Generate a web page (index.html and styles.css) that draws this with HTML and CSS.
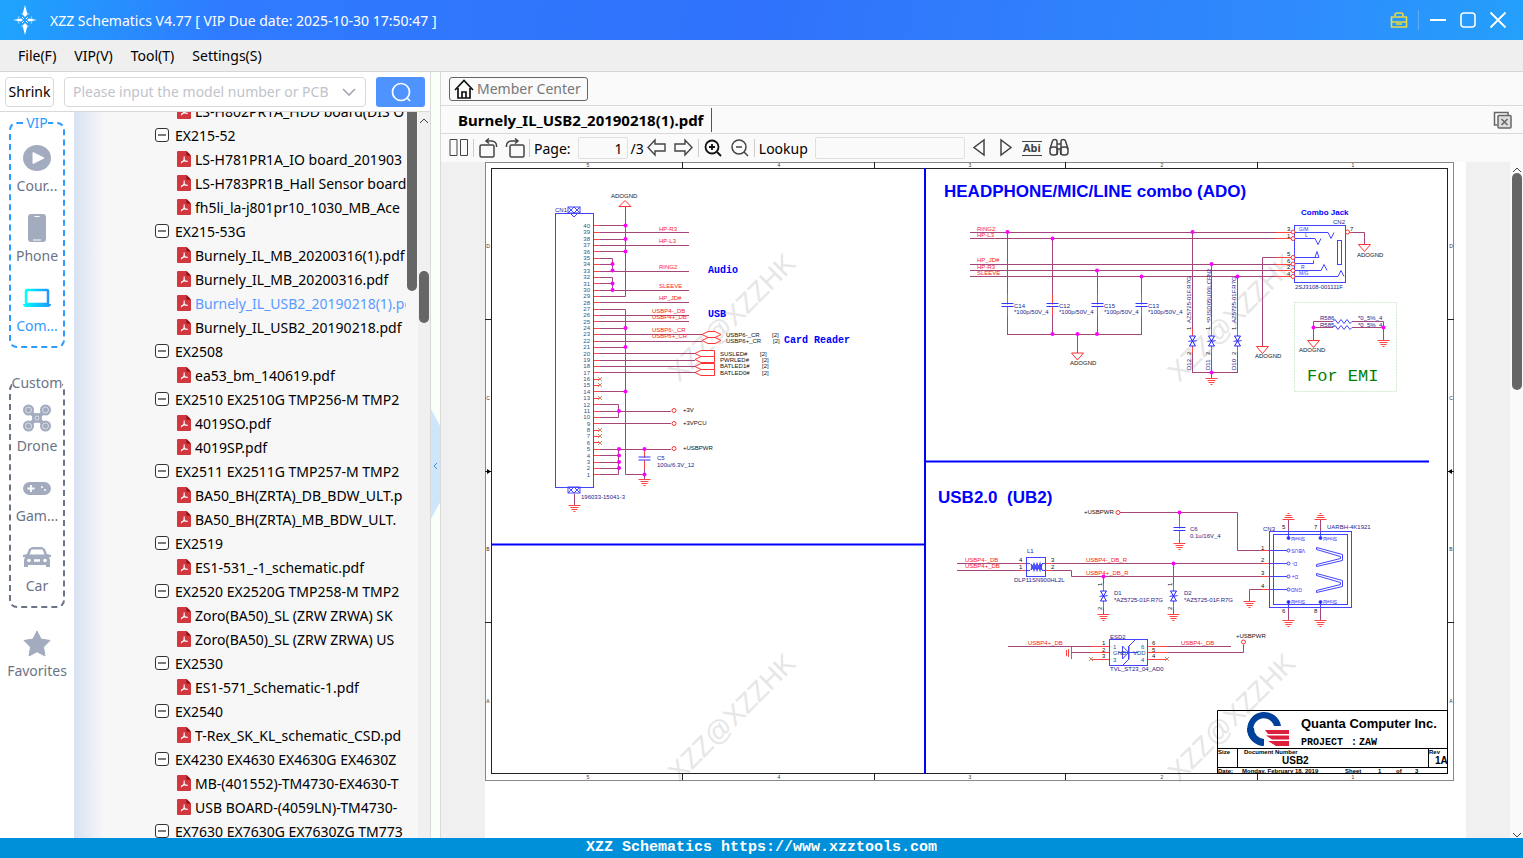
FILE: index.html
```html
<!DOCTYPE html>
<html lang="en">

<head>
    <meta charset="UTF-8">
    <meta name="viewport" content="width=device-width, initial-scale=1.0">
    <title>XZZ Schematics</title>
    <link rel="stylesheet" href="styles.css">
</head>

<body>
    <!-- Shared symbols -->
    <svg class="defs" aria-hidden="true">
        <symbol id="minus" viewBox="0 0 14 14">
            <rect x="0.5" y="0.5" width="13" height="13" rx="2.5" fill="#fff" stroke="#333" />
            <path d="M3 7h8" stroke="#333" stroke-width="1.3" />
        </symbol>
        <symbol id="pdf" viewBox="0 0 14 16">
            <path d="M1 0h8.5l4.5 4.5V15a1 1 0 0 1-1 1H1a1 1 0 0 1-1-1V1a1 1 0 0 1 1-1z" fill="#d2373f" />
            <path d="M9.5 0v4.5H14z" fill="#8f1018" />
            <path d="M7 5.5c.8 2.5.2 4.5-3 6.5M6.8 8c1 1.8 2.2 2.6 4 2.7M4.5 11c2-1.2 4-1.4 6-.6" fill="none" stroke="#fff" stroke-width="1.1" />
        </symbol>
        <defs>
            <path id="gnd" d="M-6 .5H6M-4 2.5H4M-3 4.5H3M-1 6.5H1" fill="none" stroke="#f44" />
            <path id="agnd" d="M-6 0H6L0 7z" fill="#fff" stroke="#f33" />
            <g id="cap">
                <path d="M0-9V12" stroke="#f44" />
                <path d="M-3 1H3V3H-3z" fill="#fff" />
                <path d="M-6 0H6M-6 3H6" stroke="#33f" />
            </g>
            <g id="tvs">
                <path d="M0-12V12" stroke="#f44" />
                <path d="M-3-5H3L0 0zM-3 5H3L0 0zM-4 1L-3 0H3L4-1" fill="#fff" stroke="#22f" />
            </g>
            <circle id="dot" r="2" fill="#f0f" />
            <path id="nc" d="M-2-2L2 2M-2 2L2-2" stroke="#c98a6a" />
        </defs>
    </svg>

    <header class="titlebar">
        <svg class="logo" width="24" height="30" viewBox="0 0 24 30">
            <circle cx="12" cy="15" r="7" fill="none" stroke="#8fd0ff" stroke-width="1.2" stroke-dasharray="8 3" stroke-dashoffset="4" />
            <path d="M12 0l2.5 9.5L12 12l-2.5-2.5zM12 30l2.5-9.5L12 18l-2.5 2.5zM0 15l8-1.5 2 1.5-2 1.5zM24 15l-8-1.5-2 1.5 2 1.5z" fill="#fff" />
            <path d="M9 12l2 2M15 12l-2 2M9 18l2-2M15 18l-2-2" stroke="#fff" />
        </svg>
        <span class="app-title">XZZ Schematics V4.77 [ VIP Due date: 2025-10-30 17:50:47 ]</span>
        <div class="window-buttons">
            <button aria-label="Toolbox"><svg width="18" height="18" viewBox="0 0 18 18" fill="none" stroke="#e6dc3c" stroke-width="1.6">
                    <path d="M5 5V4q0-2 2-2h4q2 0 2 2v1M1.500 6h15v10h-15zM1.500 11h15M6 13h6" />
                </svg></button>
            <span class="divider"></span>
            <button aria-label="Minimize"><svg width="18" height="18" viewBox="0 0 18 18" stroke="#fff" stroke-width="2">
                    <path d="M1 9h16" />
                </svg></button>
            <button aria-label="Maximize"><svg width="18" height="18" viewBox="0 0 18 18" fill="none" stroke="#fff" stroke-width="1.6">
                    <rect x="2" y="2" width="14" height="14" rx="3" />
                </svg></button>
            <button aria-label="Close"><svg width="18" height="18" viewBox="0 0 18 18" stroke="#fff" stroke-width="1.8">
                    <path d="M1.5 1.5l15 15M16.5 1.5l-15 15" />
                </svg></button>
        </div>
    </header>

    <nav class="menubar">
        <button>File(F)</button>
        <button>VIP(V)</button>
        <button>Tool(T)</button>
        <button>Settings(S)</button>
    </nav>

    <main class="workspace">
        <section class="left-panel">
            <div class="search-row">
                <button class="shrink">Shrink</button>
                <div class="combo">
                    <input type="text" aria-label="Model number" placeholder="Please input the model number or PCB">
                    <svg width="14" height="8" viewBox="0 0 14 8" fill="none" stroke="#a0a6ae" stroke-width="1.6">
                        <path d="M1 1l6 6 6-6" />
                    </svg>
                </div>
                <button class="search-button" aria-label="Search"><svg width="22" height="20" viewBox="0 0 22 20" fill="none" stroke="#fff" stroke-width="1.7">
                        <circle cx="11" cy="10" r="8.5" />
                        <path d="M17 16l3 3" />
                    </svg></button>
            </div>

            <div class="browser">
                <aside class="categories">
                    <fieldset class="group vip">
                        <legend>VIP</legend>
                        <button class="category"><svg viewBox="0 0 28 28">
                                <ellipse cx="14" cy="14" rx="14" ry="13" fill="#a3abbf" />
                                <path d="M10 8.5v11l11-5.5z" fill="#fff" stroke="#fff" stroke-linejoin="round" />
                            </svg>Cour...</button>
                        <button class="category"><svg viewBox="0 0 28 28">
                                <rect x="5" y="0" width="18" height="28" rx="3" fill="#a3abbf" />
                                <path d="M11.5 2.5h5M10 26h8" stroke="#fff" />
                            </svg>Phone</button>
                        <button class="category active"><svg viewBox="0 0 28 28">
                                <defs>
                                    <linearGradient id="cyan">
                                        <stop offset="0" stop-color="#0ff" />
                                        <stop offset="1" stop-color="#2196ff" />
                                    </linearGradient>
                                </defs>
                                <rect x="3" y="6" width="22" height="14" rx="1" fill="none" stroke="url(#cyan)" stroke-width="2.5" />
                                <path d="M0 20h28v1l-2 2H2l-2-2z" fill="url(#cyan)" />
                            </svg>Com...</button>
                    </fieldset>

                    <fieldset class="group custom">
                        <legend>Custom</legend>
                        <button class="category"><svg viewBox="0 0 28 28">
                                <path d="M5 6l9 8 9-8M5 22l9-8 9 8" fill="none" stroke="#a3abbf" stroke-width="4" />
                                <g fill="#a3abbf">
                                    <circle cx="5.5" cy="6" r="5.5" />
                                    <circle cx="22.5" cy="6" r="5.5" />
                                    <circle cx="5.5" cy="22" r="5.5" />
                                    <circle cx="22.5" cy="22" r="5.5" />
                                    <circle cx="14" cy="14" r="5" />
                                </g>
                                <g fill="none" stroke="#e6e9f0" stroke-width="0.8">
                                    <circle cx="5.5" cy="6" r="3" />
                                    <circle cx="22.5" cy="6" r="3" />
                                    <circle cx="5.5" cy="22" r="3" />
                                    <circle cx="22.5" cy="22" r="3" />
                                    <circle cx="14" cy="14" r="2" />
                                </g>
                            </svg>Drone</button>
                        <button class="category"><svg viewBox="0 0 28 28">
                                <rect x="0" y="8" width="28" height="13" rx="6.5" fill="#a3abbf" />
                                <path d="M8 11v7M4.5 14.5h7" stroke="#fff" stroke-width="1.8" />
                                <circle cx="19" cy="13" r="1" fill="#fff" />
                                <circle cx="22" cy="16" r="1" fill="#fff" />
                            </svg>Gam...</button>
                        <button class="category"><svg viewBox="0 0 28 28">
                                <path d="M0 11l4-1 2-5 3-2h10l3 2 2 5 4 1v2h-2l1 3v7h-4v-2H5v2H1v-7l1-3H0z" fill="#a3abbf" />
                                <path d="M6.500 10.500L8.500 5.500h11l2 5z" fill="#fff" />
                                <circle cx="6" cy="16.5" r="1.8" fill="#fff" />
                                <circle cx="22" cy="16.5" r="1.8" fill="#fff" />
                                <path d="M11 16.5h6" stroke="#fff" stroke-width="2.5" />
                            </svg>Car</button>
                    </fieldset>

                    <button class="category favorites"><svg viewBox="0 0 28 28">
                            <path d="M14 2l4 8 9 1.5-6.5 6.5 1.5 9-8-4.3L6 27l1.5-9L1 11.5 10 10z" fill="#a3abbf" stroke="#a3abbf" stroke-linejoin="round" />
                        </svg>Favorites</button>
                </aside>

                <div class="tree">
                    <ul>
                        <li class="file"><a href="#"><svg><use href="#pdf" /></svg>LS-H802PR1A_HDD board(DIS O</a></li>
                        <li><button><svg><use href="#minus" /></svg>EX215-52</button></li>
                        <li class="file"><a href="#"><svg><use href="#pdf" /></svg>LS-H781PR1A_IO board_201903</a></li>
                        <li class="file"><a href="#"><svg><use href="#pdf" /></svg>LS-H783PR1B_Hall Sensor board</a></li>
                        <li class="file"><a href="#"><svg><use href="#pdf" /></svg>fh5li_la-j801pr10_1030_MB_Ace</a></li>
                        <li><button><svg><use href="#minus" /></svg>EX215-53G</button></li>
                        <li class="file"><a href="#"><svg><use href="#pdf" /></svg>Burnely_IL_MB_20200316(1).pdf</a></li>
                        <li class="file"><a href="#"><svg><use href="#pdf" /></svg>Burnely_IL_MB_20200316.pdf</a></li>
                        <li class="file selected"><a href="#"><svg><use href="#pdf" /></svg>Burnely_IL_USB2_20190218(1).pdf</a></li>
                        <li class="file"><a href="#"><svg><use href="#pdf" /></svg>Burnely_IL_USB2_20190218.pdf</a></li>
                        <li><button><svg><use href="#minus" /></svg>EX2508</button></li>
                        <li class="file"><a href="#"><svg><use href="#pdf" /></svg>ea53_bm_140619.pdf</a></li>
                        <li><button><svg><use href="#minus" /></svg>EX2510 EX2510G TMP256-M TMP2</button></li>
                        <li class="file"><a href="#"><svg><use href="#pdf" /></svg>4019SO.pdf</a></li>
                        <li class="file"><a href="#"><svg><use href="#pdf" /></svg>4019SP.pdf</a></li>
                        <li><button><svg><use href="#minus" /></svg>EX2511 EX2511G TMP257-M TMP2</button></li>
                        <li class="file"><a href="#"><svg><use href="#pdf" /></svg>BA50_BH(ZRTA)_DB_BDW_ULT.p</a></li>
                        <li class="file"><a href="#"><svg><use href="#pdf" /></svg>BA50_BH(ZRTA)_MB_BDW_ULT.</a></li>
                        <li><button><svg><use href="#minus" /></svg>EX2519</button></li>
                        <li class="file"><a href="#"><svg><use href="#pdf" /></svg>ES1-531_-1_schematic.pdf</a></li>
                        <li><button><svg><use href="#minus" /></svg>EX2520 EX2520G TMP258-M TMP2</button></li>
                        <li class="file"><a href="#"><svg><use href="#pdf" /></svg>Zoro(BA50)_SL (ZRW ZRWA) SK</a></li>
                        <li class="file"><a href="#"><svg><use href="#pdf" /></svg>Zoro(BA50)_SL (ZRW ZRWA) US</a></li>
                        <li><button><svg><use href="#minus" /></svg>EX2530</button></li>
                        <li class="file"><a href="#"><svg><use href="#pdf" /></svg>ES1-571_Schematic-1.pdf</a></li>
                        <li><button><svg><use href="#minus" /></svg>EX2540</button></li>
                        <li class="file"><a href="#"><svg><use href="#pdf" /></svg>T-Rex_SK_KL_schematic_CSD.pd</a></li>
                        <li><button><svg><use href="#minus" /></svg>EX4230 EX4630 EX4630G EX4630Z</button></li>
                        <li class="file"><a href="#"><svg><use href="#pdf" /></svg>MB-(401552)-TM4730-EX4630-T</a></li>
                        <li class="file"><a href="#"><svg><use href="#pdf" /></svg>USB BOARD-(4059LN)-TM4730-</a></li>
                        <li><button><svg><use href="#minus" /></svg>EX7630 EX7630G EX7630ZG TM773</button></li>
                    </ul>
                </div>
                <div class="inner-scroll"><span></span></div>
                <div class="outer-scroll">
                    <svg width="10" height="6" viewBox="0 0 10 6" fill="none" stroke="#444">
                        <path d="M1 5l4-4 4 4" />
                    </svg>
                    <span></span>
                </div>
            </div>
        </section>

        <div class="splitter"><button aria-label="Collapse panel"><svg width="5" height="8" viewBox="0 0 5 8" fill="none" stroke="#4a90d9">
                    <path d="M4 1L1 4l3 3" />
                </svg></button></div>

        <section class="viewer">
            <div class="member-row">
                <button class="member"><svg width="20" height="20" viewBox="0 0 20 20" fill="none" stroke="#111" stroke-width="1.7">
                        <path d="M1 11l9-9.5 9 9.5M4 9v10h12V9M8 19v-6h4v6" />
                    </svg>Member Center</button>
            </div>
            <div class="tabs">
                <button class="tab">Burnely_IL_USB2_20190218(1).pdf</button>
                <button class="close-all" aria-label="Close all"><svg width="20" height="18" viewBox="0 0 20 18" fill="none" stroke="#666" stroke-width="1.5">
                        <path d="M4 14H1.5V1.5H15V4" />
                        <rect x="5" y="4.5" width="13" height="12.5" rx="1" fill="#ddd" />
                        <path d="M8.5 8l6 6M14.5 8l-6 6" />
                    </svg></button>
            </div>
            <div class="toolbar">
                <button aria-label="Two pages"><svg viewBox="0 0 20 20">
                        <path d="M1 1.5h7v16H1zM11.5 1.5h7v16h-7z" />
                    </svg></button>
                <span class="sep"></span>
                <button aria-label="Rotate left"><svg viewBox="0 0 20 20" stroke-width="1.5">
                        <rect x="2" y="7" width="14" height="12" rx="1.5" />
                        <path d="M18.500 9c.5-4-2-6-5-6H8M11 .5L8 3l3 2.500" />
                    </svg></button>
                <button aria-label="Rotate right"><svg viewBox="0 0 20 20" stroke-width="1.5">
                        <rect x="5" y="7" width="14" height="12" rx="1.5" />
                        <path d="M1.500 9c-.5-4 2-6 5-6h6M10 .5L13 3l-3 2.500" />
                    </svg></button>
                <span class="sep"></span>
                <label class="page-label" for="page">Page:</label>
                <input id="page" type="text" value="1">
                <span class="count">/3</span>
                <button aria-label="Previous page"><svg viewBox="0 0 20 20" stroke-width="1.4">
                        <path d="M1 9.500L8 2v4h10v7H8v4z" />
                    </svg></button>
                <button aria-label="Next page"><svg viewBox="0 0 20 20" stroke-width="1.4">
                        <path d="M18 9.500L11 2v4H1v7h10v4z" />
                    </svg></button>
                <span class="sep"></span>
                <button aria-label="Zoom in"><svg class="dark" viewBox="0 0 20 20" stroke-width="1.8">
                        <circle cx="9" cy="9" r="6.5" />
                        <path d="M14 14l4 4M6 9h6M9 6v6" />
                    </svg></button>
                <button aria-label="Zoom out"><svg viewBox="0 0 20 20" stroke-width="1.5">
                        <circle cx="9" cy="9" r="7" />
                        <path d="M14 14l4 4M6 9h6" />
                    </svg></button>
                <span class="sep"></span>
                <label class="lookup-label" for="lookup">Lookup</label>
                <input id="lookup" type="text">
                <button aria-label="Find previous"><svg viewBox="0 0 20 20" stroke-width="1.5">
                        <path d="M16 2v15L6 9.500z" />
                    </svg></button>
                <button aria-label="Find next"><svg viewBox="0 0 20 20" stroke-width="1.5">
                        <path d="M6 2v15l10-7.500z" />
                    </svg></button>
                <button class="abi">Abi</button>
                <button aria-label="Find all"><svg viewBox="0 0 20 20" stroke-width="1.5">
                        <path d="M1 11L3.500 3c.5-2 4-2 4.500 0v14M19 11l-2.500-8c-.5-2-4-2-4.500 0v14M8 6h4M8 11h4" />
                        <rect x="1" y="9" width="7.5" height="8" rx="3" />
                        <rect x="11.500" y="9" width="7.5" height="8" rx="3" />
                    </svg></button>
            </div>

            <div class="canvas">
                <div class="sheet">
                    <svg viewBox="485 162 981 676" class="schematic">
                        <!-- Watermarks -->
                        <g class="watermark">
                            <text transform="translate(679 383) rotate(-45)">XZZ@XZZHK</text>
                            <text transform="translate(1179 383) rotate(-45)">XZZ@XZZHK</text>
                            <text transform="translate(679 783) rotate(-45)">XZZ@XZZHK</text>
                            <text transform="translate(1179 783) rotate(-45)">XZZ@XZZHK</text>
                        </g>

                        <!-- Frame -->
                        <g class="frame">
                            <rect x="485.5" y="162.5" width="968" height="618" stroke="#888" />
                            <rect x="491.5" y="168.5" width="956" height="605" />
                            <path d="M682.5 162v6M874.5 162v6M1065.5 162v6M1257.5 162v6M682.5 774v6M874.5 774v6M1065.5 774v6M1257.5 774v6M485 319.5h6M485 622.5h6M1448 319.5h6M1448 622.5h6M485 471.5h6M1448 471.5h6" />
                            <path d="M487 469l4 2.5-4 2.5zM1452 469l-4 2.5 4 2.5z" fill="#000" stroke="none" />
                        </g>
                        <g class="zone">
                            <text x="588" y="167">5</text><text x="779" y="167">4</text><text x="970" y="167">3</text><text x="1162" y="167">2</text><text x="1353" y="167">1</text>
                            <text x="588" y="779">5</text><text x="779" y="779">4</text><text x="970" y="779">3</text><text x="1162" y="779">2</text><text x="1353" y="779">1</text>
                            <text x="488" y="248">D</text><text x="488" y="400">C</text><text x="488" y="551">B</text><text x="488" y="703">A</text>
                            <text x="1451" y="248">D</text><text x="1451" y="400">C</text><text x="1451" y="551">B</text><text x="1451" y="703">A</text>
                        </g>
                        <path class="section-line" d="M925 168V774M491 544.5H925M925 461.5H1429" />

                        <!-- CN1 connector -->
                        <g class="wire">
                            <path d="M600 225.5h25M600 232.5h89M600 239.5h25M600 245.5h89M600 251.5h25M600 258.5h12.5v13M600 264.5h12M600 271.5h89M600 277.5h12.5v13M600 283.5h12M600 290.5h89M600 296.5h25.5V207M600 302.5h89" />
                            <path d="M600 309.5h25.5V474.5h19M600 315.5h89M600 321.5h89M600 328.5h25M600 334.5h102M600 341.5h102M600 347.5h25M600 353.5h95M600 360.5h95M600 366.5h95M600 372.5h95M600 391.5h25" />
                            <path d="M600 404.5h18.5v13H600M600 411.5h71M600 423.5h71M600 449.5h71M600 455.5h18M600 462.5h18M600 468.5h18M618.5 449v25.5H600M644.5 449v30M574.5 494v12" />
                        </g>
                        <path class="pin-stub" d="M594 225.5h6M594 232.5h6M594 239.5h6M594 245.5h6M594 251.5h6M594 258.5h6M594 264.5h6M594 271.5h6M594 277.5h6M594 283.5h6M594 290.5h6M594 296.5h6M594 302.5h6M594 309.5h6M594 315.5h6M594 321.5h6M594 328.5h6M594 334.5h6M594 341.5h6M594 347.5h6M594 353.5h6M594 360.5h6M594 366.5h6M594 372.5h6M594 379.5h6M594 385.5h6M594 391.5h6M594 398.5h6M594 404.5h6M594 411.5h6M594 417.5h6M594 423.5h6M594 430.5h6M594 436.5h6M594 442.5h6M594 449.5h6M594 455.5h6M594 462.5h6M594 468.5h6M594 474.5h6" />
                        <rect class="part" x="555.5" y="213.5" width="38" height="274" />
                        <g class="hatch">
                            <rect x="568" y="207" width="12" height="6" />
                            <path d="M568 207l6 6 6-6M568 213l6-6 6 6M571 214l3 3 3-3" />
                            <rect x="568" y="487" width="12" height="6" />
                            <path d="M568 487l6 6 6-6M568 493l6-6 6 6" />
                        </g>
                        <g class="pins">
                            <text x="590" y="228">40</text><text x="590" y="234">39</text><text x="590" y="241">38</text><text x="590" y="247">37</text><text x="590" y="254">36</text>
                            <text x="590" y="260">35</text><text x="590" y="266">34</text><text x="590" y="273">33</text><text x="590" y="279">32</text><text x="590" y="286">31</text>
                            <text x="590" y="292">30</text><text x="590" y="298">29</text><text x="590" y="305">28</text><text x="590" y="311">27</text><text x="590" y="317">26</text>
                            <text x="590" y="324">25</text><text x="590" y="330">24</text><text x="590" y="336">23</text><text x="590" y="343">22</text><text x="590" y="349">21</text>
                            <text x="590" y="356">20</text><text x="590" y="362">19</text><text x="590" y="368">18</text><text x="590" y="375">17</text><text x="590" y="381">16</text>
                            <text x="590" y="387">15</text><text x="590" y="394">14</text><text x="590" y="400">13</text><text x="590" y="407">12</text><text x="590" y="413">11</text>
                            <text x="590" y="419">10</text><text x="590" y="426">9</text><text x="590" y="432">8</text><text x="590" y="438">7</text><text x="590" y="445">6</text>
                            <text x="590" y="451">5</text><text x="590" y="458">4</text><text x="590" y="464">3</text><text x="590" y="470">2</text><text x="590" y="477">1</text>
                        </g>
                        <g>
                            <use href="#nc" x="600" y="379" /><use href="#nc" x="600" y="385" /><use href="#nc" x="600" y="398" /><use href="#nc" x="600" y="430" /><use href="#nc" x="600" y="436" /><use href="#nc" x="600" y="443" />
                            <use href="#dot" x="625.5" y="225.5" /><use href="#dot" x="625.5" y="239" /><use href="#dot" x="625.5" y="251.5" /><use href="#dot" x="612.5" y="264" /><use href="#dot" x="612.5" y="270.5" /><use href="#dot" x="612.5" y="283.5" /><use href="#dot" x="612.5" y="290" />
                            <use href="#dot" x="625.5" y="328" /><use href="#dot" x="625.5" y="347" /><use href="#dot" x="625.5" y="391.5" /><use href="#dot" x="619" y="411" /><use href="#dot" x="619" y="449" /><use href="#dot" x="619" y="455.5" /><use href="#dot" x="619" y="462" /><use href="#dot" x="619" y="468" />
                            <use href="#cap" x="644.5" y="457" />
                            <use href="#dot" x="644.5" y="449" /><use href="#dot" x="644.5" y="474.5" />
                            <use href="#gnd" x="644.5" y="479" /><use href="#gnd" x="574.5" y="505" />
                        </g>
                        <g class="port">
                            <path d="M619 206.5h12l-6-6z" />
                            <path d="M702 334.5l6-3h7l6 3-6 3h-7zM702 340.5l6-3h7l6 3-6 3h-7z" />
                            <path d="M695 353.5l6-3h13.5v6H701zM695 359.5l6-3h13.5v6H701zM695 366.5l6-3h13.5v6H701zM695 372.5l6-3h13.5v6H701z" />
                            <circle cx="674" cy="410.5" r="2" /><circle cx="674" cy="423.5" r="2" /><circle cx="674" cy="448.5" r="2" />
                        </g>
                        <g class="net">
                            <text x="659" y="231">HP-R3</text><text x="659" y="243">HP-L3</text><text x="659" y="269">RING2</text><text x="659" y="288">SLEEVE</text><text x="659" y="300">HP_JD#</text>
                            <text x="652" y="313">USBP4-_DB</text><text x="652" y="319">USBP4+_DB</text><text x="652" y="332">USBP6-_CR</text><text x="652" y="338">USBP6+_CR</text>
                        </g>
                        <g class="note">
                            <text x="611" y="198">ADOGND</text>
                            <text x="726" y="337">USBP6-_CR</text><text x="726" y="343">USBP6+_CR</text><text x="772" y="337">[2]</text><text x="773" y="343">[2]</text>
                            <text x="720" y="356">SUSLED#</text><text x="720" y="362">PWRLED#</text><text x="720" y="368">BATLED1#</text><text x="720" y="375">BATLED0#</text>
                            <text x="760" y="356">[2]</text><text x="762" y="362">[2]</text><text x="762" y="368">[2]</text><text x="762" y="375">[2]</text>
                            <text x="683" y="412">+3V</text><text x="683" y="425">+3VPCU</text><text x="683" y="450">+USBPWR</text>
                        </g>
                        <g class="ref">
                            <text x="555" y="212">CN1</text><text x="581" y="499">196033-15041-3</text>
                            <text x="657" y="460">C5</text><text x="657" y="467">100u/6.3V_12</text>
                        </g>
                        <g class="heading-mono">
                            <text x="708" y="273">Audio</text><text x="708" y="317">USB</text><text x="784" y="343">Card Reader</text>
                        </g>

                        <!-- Headphone / mic combo -->
                        <text class="heading" x="944" y="197">HEADPHONE/MIC/LINE combo (ADO)</text>
                        <path class="wire" d="M970 232.5h306M970 238.5h306M970 264.5h306M970 270.5h306M970 276.5h306M1007.5 232v102M1052.5 238v96M1097.5 270v64M1141.5 276v58M1007 334.5h135M1077.5 334v19M1192.5 232v140M1211.5 264v114M1237.5 276v96M1192 372.5h46M1276 257.5h-13.5v89M1352 232.5h12.5v12" />
                        <path class="pin-stub" d="M1276 232.5h15M1276 238.5h15M1276 257.5h15M1276 264.5h15M1276 270.5h15M1276 276.5h15M1349 232.5h3" />
                        <g>
                            <use href="#cap" x="1007.5" y="303.5" /><use href="#cap" x="1052.5" y="303.5" /><use href="#cap" x="1097.5" y="303.5" /><use href="#cap" x="1141.5" y="303.5" />
                            <use href="#agnd" x="1077.5" y="353" /><use href="#agnd" x="1262.5" y="346.5" /><use href="#agnd" x="1364.5" y="244.5" />
                            <use href="#tvs" x="1192.5" y="341" /><use href="#tvs" x="1211.5" y="341" /><use href="#tvs" x="1237.5" y="341" />
                            <use href="#gnd" x="1211.5" y="378" />
                            <use href="#dot" x="1007.5" y="232" /><use href="#dot" x="1052.5" y="238.5" /><use href="#dot" x="1097" y="270.5" /><use href="#dot" x="1141.5" y="276.5" /><use href="#dot" x="1052.5" y="334" /><use href="#dot" x="1077.5" y="334" /><use href="#dot" x="1097" y="334" />
                            <use href="#dot" x="1192.5" y="232" /><use href="#dot" x="1211.5" y="264" /><use href="#dot" x="1237.5" y="276.5" /><use href="#dot" x="1211.5" y="372.5" />
                        </g>
                        <g class="part">
                            <rect x="1294.5" y="225.5" width="51" height="57" />
                            <path d="M1294 232.5h34l3 6 3-6M1294 238.5h21l3 6 3-6M1294 257.5h25l-2-6-2 6M1294 263.5h19.5v-3M1294 270.5h27l3-6 3 6M1294 276.5h44l3-6 3 6" />
                            <rect x="1337.5" y="240.5" width="4" height="24" />
                        </g>
                        <g class="port">
                            <circle cx="1293" cy="232" r="2" /><circle cx="1293" cy="238.5" r="2" /><circle cx="1293" cy="257.5" r="2" /><circle cx="1293" cy="264" r="2" /><circle cx="1293" cy="270.5" r="2" /><circle cx="1293" cy="276.5" r="2" /><circle cx="1347.5" cy="232" r="2" />
                        </g>
                        <g class="net">
                            <text x="977" y="231">RING2</text><text x="977" y="237">HP-L3</text><text x="977" y="262">HP_JD#</text><text x="977" y="269">HP-R3</text><text x="977" y="275">SLEEVE</text>
                        </g>
                        <g class="ref">
                            <text x="1014" y="308">C14</text><text x="1014" y="314">*100p/50V_4</text>
                            <text x="1059" y="308">C12</text><text x="1059" y="314">*100p/50V_4</text>
                            <text x="1104" y="308">C15</text><text x="1104" y="314">*100p/50V_4</text>
                            <text x="1148" y="308">C13</text><text x="1148" y="314">*100p/50V_4</text>
                            <text transform="translate(1191 323) rotate(-90)">AZ5725-01F.R7G</text>
                            <text transform="translate(1211 323) rotate(-90)">*PJSD05U06LCFN2</text>
                            <text transform="translate(1236 323) rotate(-90)">AZ5725-01F.R7G</text>
                            <text transform="translate(1191 370) rotate(-90)">D12</text><text transform="translate(1210 370) rotate(-90)">D11</text><text transform="translate(1236 370) rotate(-90)">D10</text>
                            <text x="1333" y="224">CN2</text><text x="1295" y="289">2SJ3108-001111F</text>
                            <text x="1320" y="320">R586</text><text x="1320" y="327">R585</text><text x="1358" y="320">*0_5%_4</text><text x="1358" y="327">*0_5%_4</text>
                        </g>
                        <g class="note">
                            <text transform="translate(1191 330) rotate(-90)">1</text><text transform="translate(1210 330) rotate(-90)">1</text><text transform="translate(1236 330) rotate(-90)">1</text>
                            <text transform="translate(1191 355) rotate(-90)">2</text><text transform="translate(1210 355) rotate(-90)">2</text><text transform="translate(1236 355) rotate(-90)">2</text>
                            <text x="1070" y="365">ADOGND</text><text x="1255" y="358">ADOGND</text><text x="1357" y="257">ADOGND</text><text x="1299" y="352">ADOGND</text>
                            <text x="1287" y="231">3</text><text x="1287" y="238">1</text><text x="1287" y="256">5</text><text x="1287" y="263">6</text><text x="1287" y="269">2</text><text x="1287" y="276">4</text><text x="1350" y="231">7</text>
                        </g>
                        <g class="tiny">
                            <text x="1299" y="231">G/M</text><text x="1305" y="237">L</text><text x="1301" y="269">R</text><text x="1299" y="275">M/G</text>
                        </g>
                        <text class="combo-jack" x="1301" y="215">Combo Jack</text>

                        <rect class="emi" x="1294.5" y="302.5" width="102" height="89" />
                        <path class="wire" d="M1333 321.5h-19.5v19M1333 327.5h-19M1352 321.5h31.5v19M1352 327.5h31" />
                        <path class="part" d="M1333 321.5l2-2 3 4 3-4 3 4 3-4 3 4 2-2M1333 327.5l2-2 3 4 3-4 3 4 3-4 3 4 2-2" />
                        <use href="#dot" x="1313.5" y="327.5" /><use href="#dot" x="1383.5" y="327.5" />
                        <use href="#agnd" x="1313.5" y="340.5" /><use href="#gnd" x="1383.5" y="340" />
                        <text class="emi-text" x="1307" y="381">For EMI</text>

                        <!-- USB 2.0 -->
                        <text class="heading" x="938" y="503" xml:space="preserve">USB2.0  (UB2)</text>
                        <path class="wire" d="M1120 512.5h117.5v38h25M1179.5 512v31M957 563.5h63M957 570.5h63M1052 563.5h210M1052 570.5h19.5v6h191M1103.5 576v38M1173.5 563v51M1262 589.5h-12.5v12M1288.5 519v13M1320.5 519v13M1288.5 608v13M1320.5 608v13M1008 646.5h83M1072 652.5h19M1167 646.5h64M1167 652.5h76.5v-8" />
                        <path class="pin-stub" d="M1020 563.5h6M1020 570.5h6M1046 563.5h6M1046 570.5h6M1262 550.5h7M1262 563.5h7M1262 576.5h7M1262 589.5h7M1091 646.5h18M1091 652.5h18M1091 659.5h18M1148 646.5h19M1148 652.5h19M1148 659.5h19M1071.5 647v12M1068.5 649v8M1066.5 650v6" />
                        <g class="part">
                            <rect x="1026.5" y="557.5" width="19" height="19" />
                            <path d="M1026 563.5h4M1042 563.5h4M1026 570.5h4M1042 570.5h4" />
                            <path d="M1031 564q1.5 4 3 0q1.5 4 3 0q1.5 4 3 0q1 4 2 0M1031 570q1.5-4 3 0q1.5-4 3 0q1.5-4 3 0q1-4 2 0M1031 567h11" stroke-width="1.5" />
                            <rect x="1269.5" y="531.5" width="82" height="76" />
                            <rect x="1273.5" y="534.5" width="74" height="70" />
                            <path d="M1269 550.5h18M1269 563.5h18M1269 576.5h18M1269 589.5h18M1288.5 532v6M1320.5 532v6M1288.5 602v6M1320.5 602v6" />
                            <circle cx="1288.5" cy="550.5" r="1.5" /><circle cx="1288.5" cy="563.5" r="1.5" /><circle cx="1288.5" cy="576.5" r="1.5" /><circle cx="1288.5" cy="589.5" r="1.5" />
                            <g fill="#22f">
                                <circle cx="1288.5" cy="538" r="1.5" /><circle cx="1320.5" cy="538" r="1.5" /><circle cx="1288.5" cy="602" r="1.5" /><circle cx="1320.5" cy="602" r="1.5" />
                            </g>
                            <path d="M1316.5 547.5l26 7v6l-26 6v-2l24-6v-2l-24-7zM1316.5 573.5l26 7v6l-26 6v-2l24-6v-2l-24-7z" />
                            <rect x="1109.5" y="639.5" width="38" height="26" />
                            <path d="M1135 640l-6 6v13l-6 6M1122.5 646v13l6-6.5zM1128.5 646v13M1118 652.5h20" />
                        </g>
                        <g>
                            <use href="#cap" x="1179.5" y="527.5" /><use href="#gnd" x="1179.5" y="543" />
                            <use href="#tvs" x="1103.5" y="596" /><use href="#tvs" x="1173.5" y="596" />
                            <use href="#gnd" x="1103.5" y="614" /><use href="#gnd" x="1173.5" y="614" /><use href="#gnd" x="1249.5" y="601" />
                            <use href="#gnd" x="1288.5" y="620" /><use href="#gnd" x="1320.5" y="620" />
                            <use href="#gnd" transform="translate(1288.5 520) scale(1 -1)" /><use href="#gnd" transform="translate(1320.5 520) scale(1 -1)" />
                            <use href="#dot" x="1179.5" y="512.5" /><use href="#dot" x="1173.5" y="563.5" /><use href="#dot" x="1103.5" y="576.5" />
                            <use href="#nc" x="1091" y="659" /><use href="#nc" x="1167" y="659" />
                        </g>
                        <g class="port"><circle cx="1118" cy="512.5" r="2" /><circle cx="1243.5" cy="642" r="2" /></g>
                        <g class="net">
                            <text x="965" y="562">USBP4-_DB</text><text x="965" y="568">USBP4+_DB</text><text x="1086" y="562">USBP4-_DB_R</text><text x="1086" y="575">USBP4+_DB_R</text>
                            <text x="1028" y="645">USBP4+_DB</text><text x="1181" y="645">USBP4-_DB</text>
                        </g>
                        <g class="ref">
                            <text x="1027" y="553">L1</text><text x="1014" y="582">DLP11SN900HL2L</text>
                            <text x="1190" y="531">C6</text><text x="1190" y="538">0.1u/16V_4</text>
                            <text x="1114" y="595">D1</text><text x="1114" y="602">*AZ5725-01F.R7G</text><text x="1184" y="595">D2</text><text x="1184" y="602">*AZ5725-01F.R7G</text>
                            <text x="1263" y="531">CN3</text><text x="1327" y="529">UARBH-4K1921</text>
                            <text x="1110" y="639">ESD2</text><text x="1110" y="671">TVL_ST23_04_AD0</text>
                        </g>
                        <g class="pin-name">
                            <text x="1113" y="649">1</text><text x="1113" y="655">GND</text><text x="1113" y="662">3</text><text x="1141" y="649">6</text><text x="1133" y="655">VDD</text><text x="1141" y="662">4</text>
                        </g>
                        <g class="note">
                            <text x="1084" y="514">+USBPWR</text><text x="1236" y="638">+USBPWR</text>
                            <text x="1019" y="562">4</text><text x="1019" y="569">1</text><text x="1051" y="562">3</text><text x="1051" y="569">2</text>
                            <text x="1261" y="550">1</text><text x="1261" y="562">2</text><text x="1261" y="575">3</text><text x="1261" y="588">4</text>
                            <text x="1282" y="529">5</text><text x="1314" y="529">7</text><text x="1282" y="613">6</text><text x="1314" y="613">8</text>
                            <text x="1102" y="645">1</text><text x="1102" y="652">2</text><text x="1102" y="658">3</text><text x="1152" y="645">6</text><text x="1152" y="652">5</text><text x="1152" y="658">4</text>
                            <text transform="translate(1102 586) rotate(-90)">1</text><text transform="translate(1102 610) rotate(-90)">2</text><text transform="translate(1172 586) rotate(-90)">1</text><text transform="translate(1172 610) rotate(-90)">2</text>
                        </g>
                        <g class="tiny">
                            <text transform="translate(1305 537) rotate(180)">Shield</text><text transform="translate(1337 537) rotate(180)">Shield</text>
                            <text transform="translate(1305 549) rotate(180)">VBUS</text><text transform="translate(1297 562) rotate(180)">D-</text><text transform="translate(1298 575) rotate(180)">D+</text><text transform="translate(1302 588) rotate(180)">GND</text>
                            <text transform="translate(1305 600) rotate(180)">Shield</text><text transform="translate(1337 600) rotate(180)">Shield</text>
                        </g>

                        <!-- Title block -->
                        <path class="block" d="M1217.5 710.5h230v63h-230zM1218 748.5h230M1218 767.5h230M1237.5 748v19M1428.5 748v19" />
                        <g>
                            <path d="M1264 746a17 17 0 1 1 17-20h-7a10.5 10.5 0 1 0-14 12.5z" fill="#00419a" />
                            <path d="M1247 728a17 17 0 0 0 17 17.5V739a10.5 10.5 0 0 1-10-11z" fill="#00419a" />
                            <path d="M1265 730h24v4h-21zM1266 735.5h23v4h-17zM1268 741h21v5h-13z" fill="#dc1f3c" />
                        </g>
                        <g class="block-text">
                            <text class="company" x="1301" y="728">Quanta Computer Inc.</text>
                            <text class="project" x="1301" y="745">PROJECT</text><text class="project" x="1351" y="745">:</text><text class="project" x="1359" y="745">ZAW</text>
                            <text x="1218" y="754">Size</text><text x="1244" y="754">Document Number</text><text x="1429" y="754">Rev</text>
                            <text class="value" x="1282" y="764">USB2</text><text class="value" x="1435" y="764">1A</text>
                            <text x="1218" y="773">Date:</text><text x="1242" y="773">Monday, February 18, 2019</text><text x="1345" y="773">Sheet</text><text x="1378" y="773">1</text><text x="1396" y="773">of</text><text x="1415" y="773">3</text>
                        </g>
                    </svg>
                </div>
                <div class="page-scroll">
                    <svg width="10" height="6" viewBox="0 0 10 6" fill="none" stroke="#444"><path d="M1 5l4-4 4 4" /></svg>
                    <span></span>
                    <svg width="10" height="6" viewBox="0 0 10 6" fill="none" stroke="#444"><path d="M1 1l4 4 4-4" /></svg>
                </div>
            </div>
        </section>
    </main>

    <footer>XZZ Schematics https://www.xzztools.com</footer>
</body>

</html>
```
FILE: styles.css
```css
* {
    box-sizing: border-box;
}

body {
    margin: 0;
    height: 100vh;
    display: flex;
    flex-direction: column;
    overflow: hidden;
    font-family: "Noto Sans", sans-serif;
    font-size: 14px;
    color: #000;
    background: #fff;
}

button {
    font: inherit;
    color: inherit;
    background: none;
    border: none;
    padding: 0;
}

input {
    font: inherit;
    min-width: 0;
}

.defs {
    position: absolute;
    width: 0;
    height: 0;
}

/* Title bar */
.titlebar {
    height: 40px;
    flex: none;
    display: flex;
    align-items: center;
    padding: 0 16px 0 13px;
    color: #fff;
    background: linear-gradient(100deg, #1ea5fd 0, #2f7bff 220px, #3072fb 50%, #2f8bfd 85%, #24a0fb 100%);
}

.app-title {
    margin-left: 13px;
}

.window-buttons {
    margin-left: auto;
    display: flex;
    align-items: center;
    gap: 12px;
}

.window-buttons button {
    display: flex;
}

.window-buttons .divider {
    width: 1px;
    height: 20px;
    margin: 0 -2px;
    background: #5aaefc;
}

.menubar {
    height: 32px;
    flex: none;
    display: flex;
    align-items: center;
    gap: 18px;
    padding: 0 18px;
    background: #efefef;
    border-bottom: 1px solid #d6d6d6;
}

.workspace {
    flex: 1;
    min-height: 0;
    display: flex;
}

/* Left panel */
.left-panel {
    width: 431px;
    flex: none;
    display: flex;
    flex-direction: column;
    border-right: 1px solid #d9d9d9;
}

.search-row {
    height: 40px;
    flex: none;
    display: flex;
    align-items: center;
    gap: 10px;
    padding: 0 5px;
    border-bottom: 1px solid #d9d9d9;
}

.shrink {
    width: 49px;
    height: 30px;
    border: 1px solid #d9d9d9;
    border-radius: 4px;
}

.combo {
    flex: 1;
    height: 30px;
    display: flex;
    align-items: center;
    padding: 0 9px 0 8px;
    border: 1px solid #d9d9d9;
    border-radius: 4px;
}

.combo input {
    flex: 1;
    padding: 0;
    border: none;
    outline: none;
    background: none;
}

.combo input::placeholder {
    color: #bfc4cc;
}

.search-button {
    width: 49px;
    height: 30px;
    display: flex;
    align-items: center;
    justify-content: center;
    border-radius: 3px;
    background: #4f94fe;
}

.browser {
    flex: 1;
    min-height: 0;
    display: flex;
}

.categories {
    width: 74px;
    flex: none;
    padding: 2px 9px 0;
    color: #6b7386;
}

.group {
    margin: 0;
    min-width: 0;
    width: 56px;
    display: flex;
    flex-direction: column;
    padding: 0;
    border: 2px dashed #6b7386;
    border-radius: 8px;
}

.group legend {
    padding: 0;
    margin: 0 auto;
    line-height: 18px;
}

.vip {
    border-color: #2f9bff;
    height: 234px;
}

.vip legend {
    color: #2f9bff;
}

.custom {
    margin-top: 26px;
    height: 234px;
}

.category {
    width: 100%;
    height: 70px;
    display: flex;
    flex-direction: column;
    align-items: center;
    padding-top: 12px;
    line-height: 28px;
    white-space: nowrap;
}

.category svg {
    width: 28px;
    height: 28px;
    flex: none;
}

.category.active {
    color: #2f9bff;
}

.favorites {
    margin-top: 9px;
}

/* Model tree */
.tree {
    flex: 1;
    min-width: 0;
    overflow: hidden;
    background: linear-gradient(90deg, #d8e2f2 0, #f7f7f7 30px);
}

.tree ul {
    list-style: none;
    margin: -13px 0 0;
    padding: 0 1px 0 81px;
}

.tree li {
    height: 24px;
    overflow: hidden;
    white-space: nowrap;
}

.tree li button,
.tree li a {
    height: 24px;
    display: flex;
    align-items: center;
    color: inherit;
    text-decoration: none;
}

.tree li svg {
    width: 14px;
    height: 14px;
    flex: none;
    margin-right: 6px;
}

.tree li.file {
    padding-left: 22px;
}

.tree li.file svg {
    height: 16px;
    margin-right: 4px;
}

.tree li.selected {
    color: #5b9bff;
}

.inner-scroll {
    width: 11px;
    flex: none;
    background: #f7f7f7;
}

.inner-scroll span {
    display: block;
    width: 10px;
    height: 179px;
    border-radius: 0 0 5px 5px;
    background: #666;
}

.outer-scroll {
    width: 12px;
    flex: none;
    display: flex;
    flex-direction: column;
    align-items: center;
    padding-top: 6px;
    background: #f0f0f0;
}

.outer-scroll span {
    width: 10px;
    height: 52px;
    margin-top: 147px;
    border-radius: 5px;
    background: #666;
}

.splitter {
    width: 10px;
    flex: none;
    display: flex;
    align-items: center;
    background: #fbfff9;
    border-right: 1px solid #d9d9d9;
}

.splitter button {
    width: 9px;
    height: 110px;
    margin-top: 18px;
    background: #cfe6fa;
    clip-path: polygon(0 0, 100% 15%, 100% 85%, 0 100%);
}

/* Viewer */
.viewer {
    flex: 1;
    min-width: 0;
    display: flex;
    flex-direction: column;
    background: #fafafa;
}

.member-row {
    height: 34px;
    flex: none;
    padding: 5px 8px;
    border-bottom: 1px solid #d9d9d9;
}

.member {
    height: 24px;
    display: flex;
    align-items: center;
    gap: 3px;
    padding: 0 6px 0 4px;
    line-height: 20px;
    color: #777;
    border: 1px solid #666;
    border-radius: 3px;
}

.tabs {
    height: 28px;
    flex: none;
    display: flex;
    align-items: center;
    justify-content: space-between;
    padding: 0 10px 0 17px;
    border-bottom: 1px solid #d9d9d9;
}

.tab {
    height: 24px;
    padding-right: 8px;
    font-size: 15px;
    font-weight: bold;
    line-height: 22px;
    border-right: 1px solid #555;
}

.close-all {
    display: flex;
}

.toolbar {
    height: 28px;
    flex: none;
    display: flex;
    align-items: center;
    gap: 7px;
    padding: 0 8px;
}

.toolbar button {
    width: 20px;
    height: 20px;
    flex: none;
}

.toolbar svg {
    display: block;
    width: 20px;
    height: 20px;
    fill: none;
    stroke: #444;
}

.toolbar svg.dark {
    stroke: #111;
}

.toolbar .sep {
    width: 1px;
    height: 18px;
    margin: 0 -3px;
    background: #ccc;
}

.toolbar input {
    height: 22px;
    padding: 0 4px;
    background: #fafafa;
    border: 1px solid #e0e0e0;
    border-radius: 2px;
}

#page {
    width: 50px;
    text-align: right;
}

#lookup {
    width: 150px;
    margin-right: -4px;
}

.count {
    margin: 0 -4px;
}

.toolbar .abi {
    height: 15px;
    font-size: 11px;
    font-weight: bold;
    line-height: 12px;
    color: #444;
    border-top: 1px solid #444;
    border-bottom: 1px solid #444;
}

.canvas {
    flex: 1;
    min-height: 0;
    display: flex;
    background: #f0f0f0;
}

.sheet {
    flex: 1;
    min-width: 0;
    margin: 0 44px;
    overflow: hidden;
    background: #fff;
}

.page-scroll {
    width: 13px;
    flex: none;
    display: flex;
    flex-direction: column;
    align-items: center;
    padding-top: 5px;
    background: #fafafa;
}

.page-scroll span {
    width: 10px;
    height: 217px;
    margin: 0 0 auto;
    border-radius: 5px;
    background: #666;
}

/* Schematic drawing */
.schematic {
    display: block;
    width: 100%;
    font-family: "Liberation Sans", Arial, sans-serif;
    font-size: 6px;
    fill: none;
}

.schematic text {
    stroke: none;
}

.watermark {
    font-size: 27px;
    fill: #e6e6e6;
}

.frame {
    stroke: #222;
}

.zone {
    font-size: 5px;
    text-anchor: middle;
    fill: #333;
}

.section-line {
    stroke: #0000ff;
    stroke-width: 2;
}

.wire {
    stroke: #a3467a;
}

.pin-stub {
    stroke: #ff4444;
}

.part,
.hatch {
    stroke: #4444ff;
}

.port {
    stroke: #ff3333;
    fill: #fff;
}

.pins {
    text-anchor: end;
    fill: #1a5490;
}

.pin-name {
    fill: #1a5490;
}

.net {
    fill: #ff2222;
}

.note {
    fill: #111;
}

.ref {
    fill: #1c1c8c;
}

.tiny {
    font-size: 5px;
    fill: #3333ff;
}

.heading {
    font-size: 17px;
    font-weight: bold;
    fill: #0000ff;
}

.heading-mono {
    font-family: "Liberation Mono", "Courier New", monospace;
    font-size: 10px;
    font-weight: bold;
    fill: #0000ff;
}

.combo-jack {
    font-size: 8px;
    font-weight: bold;
    fill: #0000ff;
}

.emi {
    stroke: #cfe8cf;
    stroke-dasharray: 2 1;
}

.emi-text {
    font-family: "Liberation Mono", "Courier New", monospace;
    font-size: 17px;
    fill: #008000;
}

.block {
    stroke: #000;
}

.block-text {
    fill: #000;
    stroke: none;
    font-weight: bold;
}

.block-text .company {
    font-size: 13px;
}

.block-text .project {
    font-family: "Liberation Mono", "Courier New", monospace;
    font-size: 10px;
}

.block-text .value {
    font-size: 10px;
}

footer {
    height: 20px;
    flex: none;
    font-family: "Liberation Mono", "Courier New", monospace;
    font-size: 15px;
    font-weight: bold;
    line-height: 20px;
    text-align: center;
    color: #fff;
    background: #0090da;
}
```
